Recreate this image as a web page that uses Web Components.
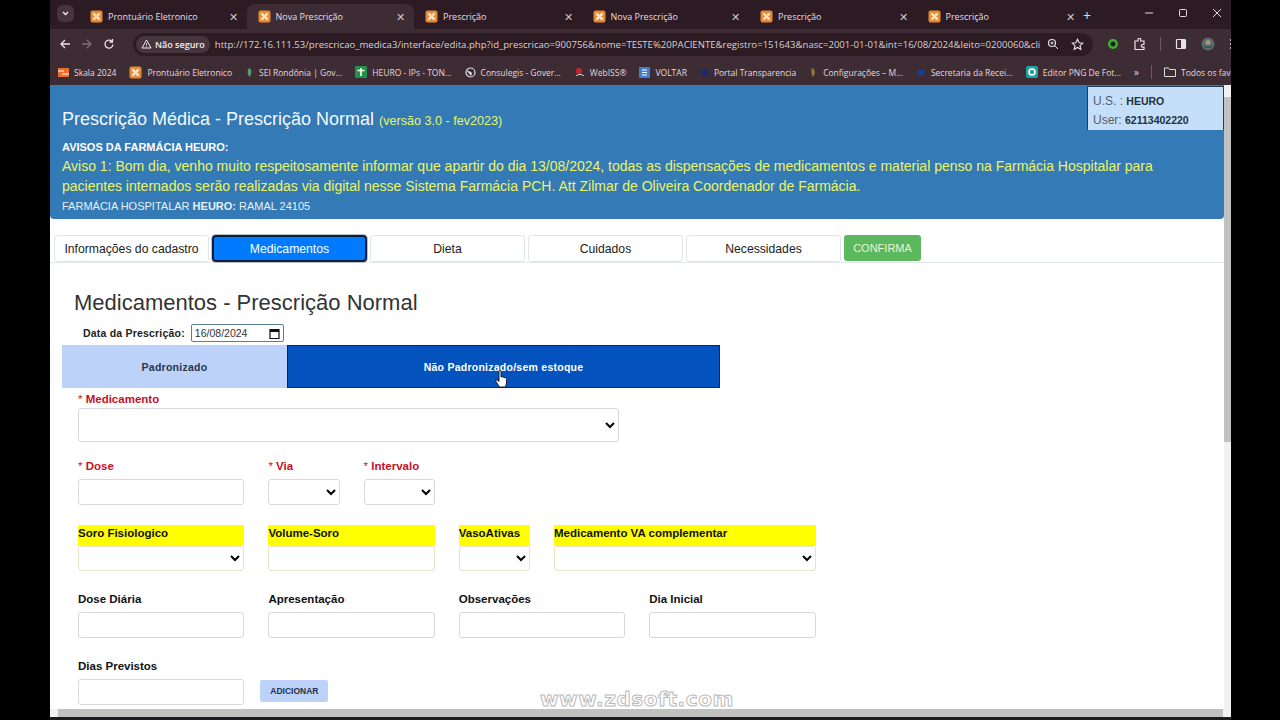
<!DOCTYPE html>
<html lang="pt-BR">
<head>
<meta charset="utf-8">
<title>Prescrição Médica</title>
<style>
  html, body { margin: 0; height: 100%; background: #000; overflow: hidden; }
</style>
</head>
<body>
<browser-window>
  <rx-page-header slot="page"></rx-page-header>
  <rx-nav slot="page"></rx-nav>
  <rx-form slot="page"></rx-form>
</browser-window>

<script>
const XAMPP = `<svg width="13" height="13" viewBox="0 0 13 13"><rect x=".5" y=".5" width="12" height="12" rx="2" fill="#e58a35"/><path d="M3 3h2l1.500 2L8 3h2v2L8 6.500 10 8v2H8L6.500 8 5 10H3V8l2-1.500L3 5z" fill="#f8e3c4"/></svg>`;

class ChromeTab extends HTMLElement {
    constructor() {
        super();
        const active = this.hasAttribute('active');
        this.attachShadow({ mode: 'open' }).innerHTML = `
          <style>
            :host { display: flex; align-items: center; width: 167.500px; height: 25px; box-sizing: border-box;
                    padding: 0 9px 0 ${active ? 11 : 11}px; gap: 5px; margin-top: 4px;
                    font: 9px "Open Sans", sans-serif; color: #e6dde0; position: relative;
                    border-radius: 8px 8px 0 0; background: ${active ? '#3e2c35' : 'transparent'}; }
            .t { flex: 1; white-space: nowrap; overflow: hidden; }
            .x { font-size: 11px; color: #cfc6ca; line-height: 1; }
            svg { flex: none; }
          </style>
          ${XAMPP}<span class="t"><slot></slot></span><span class="x">✕</span>`;
    }
}
customElements.define('chrome-tab', ChromeTab);

class BookmarkItem extends HTMLElement {
    constructor() {
        super();
        this.attachShadow({ mode: 'open' }).innerHTML = `
          <style>
            :host { display: inline-flex; align-items: center; gap: 5px; white-space: nowrap;
                    font: 8.500px "Open Sans", sans-serif; color: #e2d9dc; }
          </style>
          <slot name="icon"></slot><slot></slot>`;
    }
}
customElements.define('bookmark-item', BookmarkItem);

class BrowserWindow extends HTMLElement {
    constructor() {
        super();
        this.attachShadow({ mode: 'open' }).innerHTML = `
          <style>
            :host { display: flex; flex-direction: column; width: 1181px; height: 720px; margin-left: 50px;
                    background: #2c1b23; position: relative; overflow: hidden; }
            .tabs { display: flex; align-items: flex-start; height: 29px; flex: none; background: #2c1b23; padding-left: 4px; }
            .chev { width: 17px; height: 17px; margin: 5px 5px 0 3px; border-radius: 6px; background: #47353d; display: flex; align-items: center; justify-content: center; flex: none; }
            .plus { color: #ddd; font: 14px "Open Sans", sans-serif; margin: 6px 0 0 -1px; }
            .win { margin-left: auto; display: flex; align-items: center; gap: 24px; padding: 8px 9px 0 0; }
            .toolbar { display: flex; align-items: center; height: 30px; flex: none; background: #3e2c35; padding: 0 8px 0 9px; }
            .nav { display: flex; gap: 10px; align-items: center; width: 74px; flex: none; }
            .omni { flex: none; width: 960px; height: 23px; margin-left: 0; border-radius: 12px; background: #2c1b23; display: flex; align-items: center; padding: 0 9px 0 3px; box-sizing: border-box; }
            .secure { display: flex; align-items: center; gap: 3px; height: 17px; padding: 0 5px; border-radius: 9px; background: #47353d; color: #eee; font: 600 9px "Open Sans", sans-serif; flex: none; }
            .url { font: 9.600px "Open Sans", sans-serif; color: #d8d0d3; margin-left: 5px; white-space: nowrap; overflow: hidden; width: 826px; flex: none; }
            .omni .icons { margin-left: auto; display: flex; gap: 12px; align-items: center; }
            .ext { display: flex; align-items: center; gap: 14px; margin-left: 14px; }
            .sep { width: 1px; height: 14px; background: #6a5a61; }
            .bars { display: flex; align-items: center; height: 26px; flex: none; background: #3e2c35; padding-left: 8px; gap: 13px; border-bottom: 0; }
            .bars .right { margin-left: auto; display: flex; gap: 12px; align-items: center; padding-right: 5px; }
            .page { flex: 1; min-height: 0; display: flex; background: #fff; position: relative; }
            .content { flex: 1; min-width: 0; overflow: hidden; }
            .vbar { width: 7px; flex: none; background: #f1f1f1; position: relative; }
            .vbar i { position: absolute; left: 0; right: 0; top: 12px; height: 345px; background: #c1c1c1; }
            .hbar { height: 8px; flex: none; background: #f1f1f1; position: relative; }
            .hbar i { position: absolute; left: 8px; right: 8px; top: 0; bottom: 0; background: #c1c1c1; }
            .task { height: 3px; flex: none; background: #1c1c20; }
            .mark { position: absolute; left: 490px; top: 687px; font: bold 20px "DejaVu Sans", sans-serif; color: #fff; letter-spacing: .6px; -webkit-text-stroke: 1px #b9b9b9; }
            .hand { position: absolute; left: 445px; top: 370px; }
          </style>
          <div class="tabs">
            <div class="chev"><svg width="9" height="9" viewBox="0 0 9 9"><path d="M2 3l2.500 2.500L7 3" fill="none" stroke="#eee" stroke-width="1.300"/></svg></div>
            <chrome-tab>Prontuário Eletronico</chrome-tab>
            <chrome-tab active>Nova Prescrição</chrome-tab>
            <chrome-tab>Prescrição</chrome-tab>
            <chrome-tab>Nova Prescrição</chrome-tab>
            <chrome-tab>Prescrição</chrome-tab>
            <chrome-tab>Prescrição</chrome-tab>
            <span class="plus">+</span>
            <div class="win">
              <svg width="10" height="10" viewBox="0 0 10 10"><path d="M1 5h8" stroke="#ddd"/></svg>
              <svg width="10" height="10" viewBox="0 0 10 10"><rect x="1.500" y="1.500" width="7" height="7" rx="1" fill="none" stroke="#ddd"/></svg>
              <svg width="10" height="10" viewBox="0 0 10 10"><path d="M1 1l8 8M9 1l-8 8" stroke="#ddd"/></svg>
            </div>
          </div>
          <div class="toolbar">
            <div class="nav">
              <svg width="12" height="12" viewBox="0 0 12 12"><path d="M11 6H2M6 2L2 6l4 4" fill="none" stroke="#e8e2e4" stroke-width="1.300"/></svg>
              <svg width="12" height="12" viewBox="0 0 12 12"><path d="M1 6h9M6 2l4 4-4 4" fill="none" stroke="#7d6f75" stroke-width="1.300"/></svg>
              <svg width="12" height="12" viewBox="0 0 12 12"><path d="M10 6.500A4 4 0 1 1 8.800 3.200M9.500 1v3h-3" fill="none" stroke="#e8e2e4" stroke-width="1.300"/></svg>
            </div>
            <div class="omni">
              <div class="secure"><svg width="11" height="10" viewBox="0 0 11 10"><path d="M5.500 1L10 9H1z" fill="none" stroke="#eee"/><path d="M5.500 4v2.500M5.500 7.300v.8" stroke="#eee" stroke-width=".8"/></svg>Não seguro</div>
              <span class="url">http://172.16.111.53/prescricao_medica3/interface/edita.php?id_prescricao=900756&amp;nome=TESTE%20PACIENTE&amp;registro=151643&amp;nasc=2001-01-01&amp;int=16/08/2024&amp;leito=0200060&amp;cli...</span>
              <div class="icons">
                <svg width="12" height="12" viewBox="0 0 12 12"><circle cx="5" cy="5" r="3.500" fill="none" stroke="#e8e2e4" stroke-width="1.200"/><path d="M7.500 7.500L11 11M3.500 5h3M5 3.500v3" stroke="#e8e2e4"/></svg>
                <svg width="13" height="13" viewBox="0 0 13 13"><path d="M6.500 1.200l1.600 3.500 3.700.4-2.800 2.500.8 3.700-3.300-1.900-3.300 1.900.8-3.700L1.200 5.100l3.700-.4z" fill="none" stroke="#e8e2e4" stroke-width="1.100"/></svg>
              </div>
            </div>
            <div class="ext">
              <svg width="12" height="12" viewBox="0 0 12 12"><circle cx="6" cy="6" r="5" fill="#43b02a"/><circle cx="6" cy="6" r="2.500" fill="#123"/></svg>
              <svg width="13" height="13" viewBox="0 0 13 13"><path d="M2 3.500h3V2a1.300 1.300 0 0 1 2.600 0v1.500H11V7H9.500a1.300 1.300 0 0 0 0 2.600H11V12H2z" fill="none" stroke="#e8e2e4" stroke-width="1.200" transform="translate(0 -.5)"/></svg>
              <span class="sep"></span>
              <svg width="12" height="12" viewBox="0 0 12 12"><rect x="1.500" y="1.500" width="9" height="9" rx="1" fill="none" stroke="#e8e2e4" stroke-width="1.200"/><rect x="6" y="1.500" width="4.500" height="9" fill="#e8e2e4"/></svg>
              <svg width="14" height="14" viewBox="0 0 14 14"><circle cx="7" cy="7" r="6.500" fill="#5c6a6e"/><circle cx="7" cy="5.500" r="2.500" fill="#a59a78"/><path d="M2.500 11c1-3 8-3 9 0" fill="#2f5d66"/></svg>
              <svg width="4" height="12" viewBox="0 0 4 12"><circle cx="2" cy="2" r="1" fill="#e8e2e4"/><circle cx="2" cy="6" r="1" fill="#e8e2e4"/><circle cx="2" cy="10" r="1" fill="#e8e2e4"/></svg>
            </div>
          </div>
          <div class="bars">
            <bookmark-item><svg slot="icon" width="11" height="9" viewBox="0 0 11 9"><rect width="11" height="9" fill="#e8702a"/><path d="M0 3h6M4 6h7" stroke="#fff" stroke-width="1"/></svg>Skala 2024</bookmark-item>
            <bookmark-item>${XAMPP.replace('<svg', '<svg slot="icon"')}Prontuário Eletronico</bookmark-item>
            <bookmark-item><svg slot="icon" width="9" height="11" viewBox="0 0 9 11"><path d="M4.500 1C7 3 7 7 4.500 10 2 7 2 3 4.500 1z" fill="#5f9a6a"/></svg>SEI Rondônia | Gov...</bookmark-item>
            <bookmark-item><svg slot="icon" width="12" height="12" viewBox="0 0 12 12"><rect width="12" height="12" rx="1" fill="#1f9447"/><path d="M6 2v8M2.500 4.500h7" stroke="#fff" stroke-width="1.600"/></svg>HEURO - IPs - TON...</bookmark-item>
            <bookmark-item><svg slot="icon" width="11" height="11" viewBox="0 0 11 11"><circle cx="5.500" cy="5.500" r="4.500" fill="none" stroke="#ddd" stroke-width="1.200"/><path d="M2 4c2-1 3 1 4 1s1 3 0 4" fill="#ddd"/></svg>Consulegis - Gover...</bookmark-item>
            <bookmark-item><svg slot="icon" width="11" height="11" viewBox="0 0 11 11"><circle cx="5" cy="4" r="3" fill="#c9252b"/><path d="M2 9c2-2 6-2 8 0" stroke="#ddd" fill="none"/></svg>WebISS®</bookmark-item>
            <bookmark-item><svg slot="icon" width="11" height="11" viewBox="0 0 11 11"><rect width="11" height="11" rx="1" fill="#3f7fd0"/><path d="M3 3h5M3 5.500h5M3 8h5" stroke="#fff"/></svg>VOLTAR</bookmark-item>
            <bookmark-item><svg slot="icon" width="9" height="9" viewBox="0 0 9 9"><circle cx="4.500" cy="4.500" r="4" fill="#1d2a6b"/></svg>Portal Transparencia</bookmark-item>
            <bookmark-item><svg slot="icon" width="9" height="11" viewBox="0 0 9 11"><path d="M3 1c3 1 4 5 1 9C2 7 2 4 3 1z" fill="#8d7b3c"/></svg>Configurações – M...</bookmark-item>
            <bookmark-item><svg slot="icon" width="10" height="9" viewBox="0 0 10 9"><path d="M1 2h8v3L5 9 1 5z" fill="#1c3f84"/></svg>Secretaria da Recei...</bookmark-item>
            <bookmark-item><svg slot="icon" width="12" height="12" viewBox="0 0 12 12"><rect width="12" height="12" rx="2" fill="#20a39e"/><circle cx="6" cy="6" r="3" fill="none" stroke="#fff" stroke-width="1.600"/></svg>Editor PNG De Fot...</bookmark-item>
            <div class="right">
              <span style="font:10px 'Open Sans',sans-serif;color:#ddd">»</span>
              <span class="sep"></span>
              <bookmark-item><svg slot="icon" width="12" height="10" viewBox="0 0 12 10"><path d="M.5 1h4l1 1.500h6v7H.5z" fill="none" stroke="#e2d9dc"/></svg>Todos os favoritos</bookmark-item>
            </div>
          </div>
          <div class="page">
            <div class="content"><slot name="page"></slot></div>
            <div class="vbar"><i></i></div>
          </div>
          <div class="hbar"><i></i></div>
          <div class="task"></div>
          <svg class="hand" width="13" height="18" viewBox="0 0 13 18"><path d="M4 1.500a1 1 0 0 1 2 0V7l1-.3 1 .3 1 .3 1.500.5c.7.4 1 1 1 1.700V13l-1 4H4.500L1 11.500c-.5-1 .5-2 1.500-1.300L4 11.500z" fill="#fff" stroke="#111" stroke-width=".9"/></svg>
          <span class="mark">www.zdsoft.com</span>`;
    }
}
customElements.define('browser-window', BrowserWindow);

class RxPageHeader extends HTMLElement {
    constructor() {
        super();
        this.attachShadow({ mode: 'open' }).innerHTML = `
          <style>
            :host { display: block; position: relative; box-sizing: border-box; height: 134px; background: #337ab7;
                    border-radius: 0 0 4px 4px; padding: 22px 12px 0; color: #fff; font-family: "Liberation Sans", Arial, sans-serif; }
            .title { font-size: 18px; line-height: 24px; color: #f3f8fb; }
            .title small { font-size: 12.600px; color: #e6f56a; }
            .lbl { font-size: 11px; font-weight: bold; line-height: 14px; margin-top: 7px; }
            .aviso { font-size: 14px; line-height: 20.400px; color: #ecf45f; margin-top: 2px; }
            .ramal { font-size: 11px; line-height: 14px; margin-top: 2px; color: #e8f0f6; }
            .user { position: absolute; right: 0; top: 1px; width: 137px; height: 44px; box-sizing: border-box; background: #c5dffa;
                    border: 1px solid #1d3f60; border-bottom: 0; padding: 5px 5px; color: #53606c; font-size: 12px; line-height: 19px; }
            .user b { font-size: 10.500px; color: #22303c; }
          </style>
          <div class="title">Prescrição Médica - Prescrição Normal <small>(versão 3.0 - fev2023)</small></div>
          <div class="lbl">AVISOS DA FARMÁCIA HEURO:</div>
          <div class="aviso">Aviso 1: Bom dia, venho muito respeitosamente informar que apartir do dia 13/08/2024, todas as dispensações de medicamentos e material penso na Farmácia Hospitalar para<br>pacientes internados serão realizadas via digital nesse Sistema Farmácia PCH. Att Zilmar de Oliveira Coordenador de Farmácia.</div>
          <div class="ramal">FARMÁCIA HOSPITALAR <b>HEURO:</b> RAMAL 24105</div>
          <div class="user">U.S. : <b>HEURO</b><br>User: <b>62113402220</b></div>`;
    }
}
customElements.define('rx-page-header', RxPageHeader);

class RxPill extends HTMLElement {
    constructor() {
        super();
        this.attachShadow({ mode: 'open' }).innerHTML = `
          <style>
            :host { display: flex; align-items: center; justify-content: center; box-sizing: border-box; height: 27px; width: 155px;
                    font: 12.200px "Liberation Sans", Arial, sans-serif; color: #222; background: #fff;
                    border: 1px solid #dfe5ea; border-radius: 3px; white-space: nowrap; }
            :host([active]) { background: #007bff; color: #fff; border: 2px solid #0b1f3a; border-radius: 4px; box-shadow: 0 0 0 1px #b9c0c8; }
            :host([confirm]) { width: 77px; background: #5cb85c; color: #e6f6d8; border: 0; font-size: 11px; height: 26px; }
          </style>
          <slot></slot>`;
    }
}
customElements.define('rx-pill', RxPill);

class RxNav extends HTMLElement {
    constructor() {
        super();
        this.attachShadow({ mode: 'open' }).innerHTML = `
          <style>
            :host { display: flex; gap: 3px; margin-top: 16px; padding: 0 8px 0 4px; align-items: flex-start; border-bottom: 1px solid #e3e9ee; height: 27px; }
          </style>
          <rx-pill>Informações do cadastro</rx-pill>
          <rx-pill active>Medicamentos</rx-pill>
          <rx-pill>Dieta</rx-pill>
          <rx-pill>Cuidados</rx-pill>
          <rx-pill>Necessidades</rx-pill>
          <rx-pill confirm>CONFIRMA</rx-pill>`;
    }
}
customElements.define('rx-nav', RxNav);

class RxField extends HTMLElement {
    constructor() {
        super();
        const kind = this.getAttribute('kind') || 'input';
        const label = this.getAttribute('label');
        const control = kind === 'select' ? '<select></select>' : '<input type="text">';
        this.attachShadow({ mode: 'open' }).innerHTML = `
          <style>
            :host { display: block; font: bold 11.500px "Liberation Sans", Arial, sans-serif; color: #111; }
            label { display: block; height: 20px; line-height: 14px; white-space: nowrap; }
            .req { color: #c6101f; }
            .req i { font-style: normal; font-weight: normal; }
            :host([hl]) label { background: #ffff00; height: 21px; line-height: 16px; margin-bottom: 0; }
            input, select { display: block; width: 100%; height: 26px; box-sizing: border-box; background: #fff;
                            border: 1px solid #d5d9dd; border-radius: 3px; margin: 0; padding: 0 4px; }
            :host([hl]) input, :host([hl]) select { height: 25px; border-color: #e4e4c8; }
            :host([tall]) select { height: 34px; }
            :host([tall]) label { height: 16px; }
          </style>
          <label>${this.hasAttribute('req') ? `<span class="req"><i>* </i>${label}</span>` : label}</label>
          ${control}`;
    }
}
customElements.define('rx-field', RxField);

class RxForm extends HTMLElement {
    constructor() {
        super();
        this.attachShadow({ mode: 'open' }).innerHTML = `
          <style>
            :host { display: block; font-family: "Liberation Sans", Arial, sans-serif; padding: 0 0 0 12px; }
            h2 { font-size: 22px; font-weight: normal; color: #333; line-height: 28px; margin: 26px 0 0 12px; }
            .date { display: flex; align-items: center; gap: 6px; height: 18px; margin: 7px 0 3px 21px; font-size: 10.500px; font-weight: bold; color: #222; letter-spacing: .2px; }
            .dbox { width: 93px; height: 18px; box-sizing: border-box; border: 1px solid #5b7f96; border-radius: 2px; display: flex; align-items: center; justify-content: space-between; padding: 0 3px 0 3px; font-weight: normal; color: #333; letter-spacing: 0; }
            .sub { display: flex; width: 658px; height: 43px; }
            .sub div { display: flex; align-items: center; justify-content: center; font-size: 10.500px; font-weight: bold; letter-spacing: .25px; }
            .off { width: 225px; background: #bdd2f9; color: #26364d; }
            .on { flex: 1; background: #0352bd; color: #fff; border: 1px solid #03295f; border-width: 1px 1px 1px 1px; }
            .grid { display: grid; grid-template-columns: repeat(8, 71.200px); column-gap: 24px; margin-left: 16px; }
            .s2 { grid-column: span 2; } .s3 { grid-column: span 3; }
            .med { width: 541px; margin: 4px 0 0 16px; }
            .add { align-self: end; height: 22px; width: 68px; margin-left: 16px; margin-bottom: 3px; border-radius: 2px; background: #bdd2f9; color: #1f2f4f; font-size: 8.500px; font-weight: bold; display: flex; align-items: center; justify-content: center; }
          </style>
          <h2>Medicamentos - Prescrição Normal</h2>
          <div class="date">Data da Prescrição:
            <div class="dbox">16/08/2024
              <svg width="11" height="11" viewBox="0 0 11 11"><path d="M1 1.500h9v9H1z" fill="none" stroke="#111" stroke-width="1.200"/><rect x="1" y="1" width="9" height="3" fill="#111"/></svg>
            </div>
          </div>
          <div class="sub"><div class="off">Padronizado</div><div class="on">Não Padronizado/sem estoque</div></div>
          <rx-field class="med" label="Medicamento" kind="select" req tall></rx-field>
          <div class="grid" style="margin-top:17px">
            <rx-field class="s2" label="Dose" req></rx-field>
            <rx-field label="Via" kind="select" req></rx-field>
            <rx-field label="Intervalo" kind="select" req></rx-field>
          </div>
          <div class="grid" style="margin-top:20px">
            <rx-field class="s2" label="Soro Fisiologico" kind="select" hl></rx-field>
            <rx-field class="s2" label="Volume-Soro" hl></rx-field>
            <rx-field label="VasoAtivas" kind="select" hl></rx-field>
            <rx-field class="s3" label="Medicamento VA complementar" kind="select" hl></rx-field>
          </div>
          <div class="grid" style="margin-top:21px">
            <rx-field class="s2" label="Dose Diária"></rx-field>
            <rx-field class="s2" label="Apresentação"></rx-field>
            <rx-field class="s2" label="Observações"></rx-field>
            <rx-field class="s2" label="Dia Inicial"></rx-field>
          </div>
          <div class="grid" style="margin-top:21px">
            <rx-field class="s2" label="Dias Previstos"></rx-field>
            <div class="s2" style="display:flex;align-items:flex-end;margin-left:-8px"><div class="add" style="margin-left:0">ADICIONAR</div></div>
          </div>`;
    }
}
customElements.define('rx-form', RxForm);
</script>
</body>
</html>
